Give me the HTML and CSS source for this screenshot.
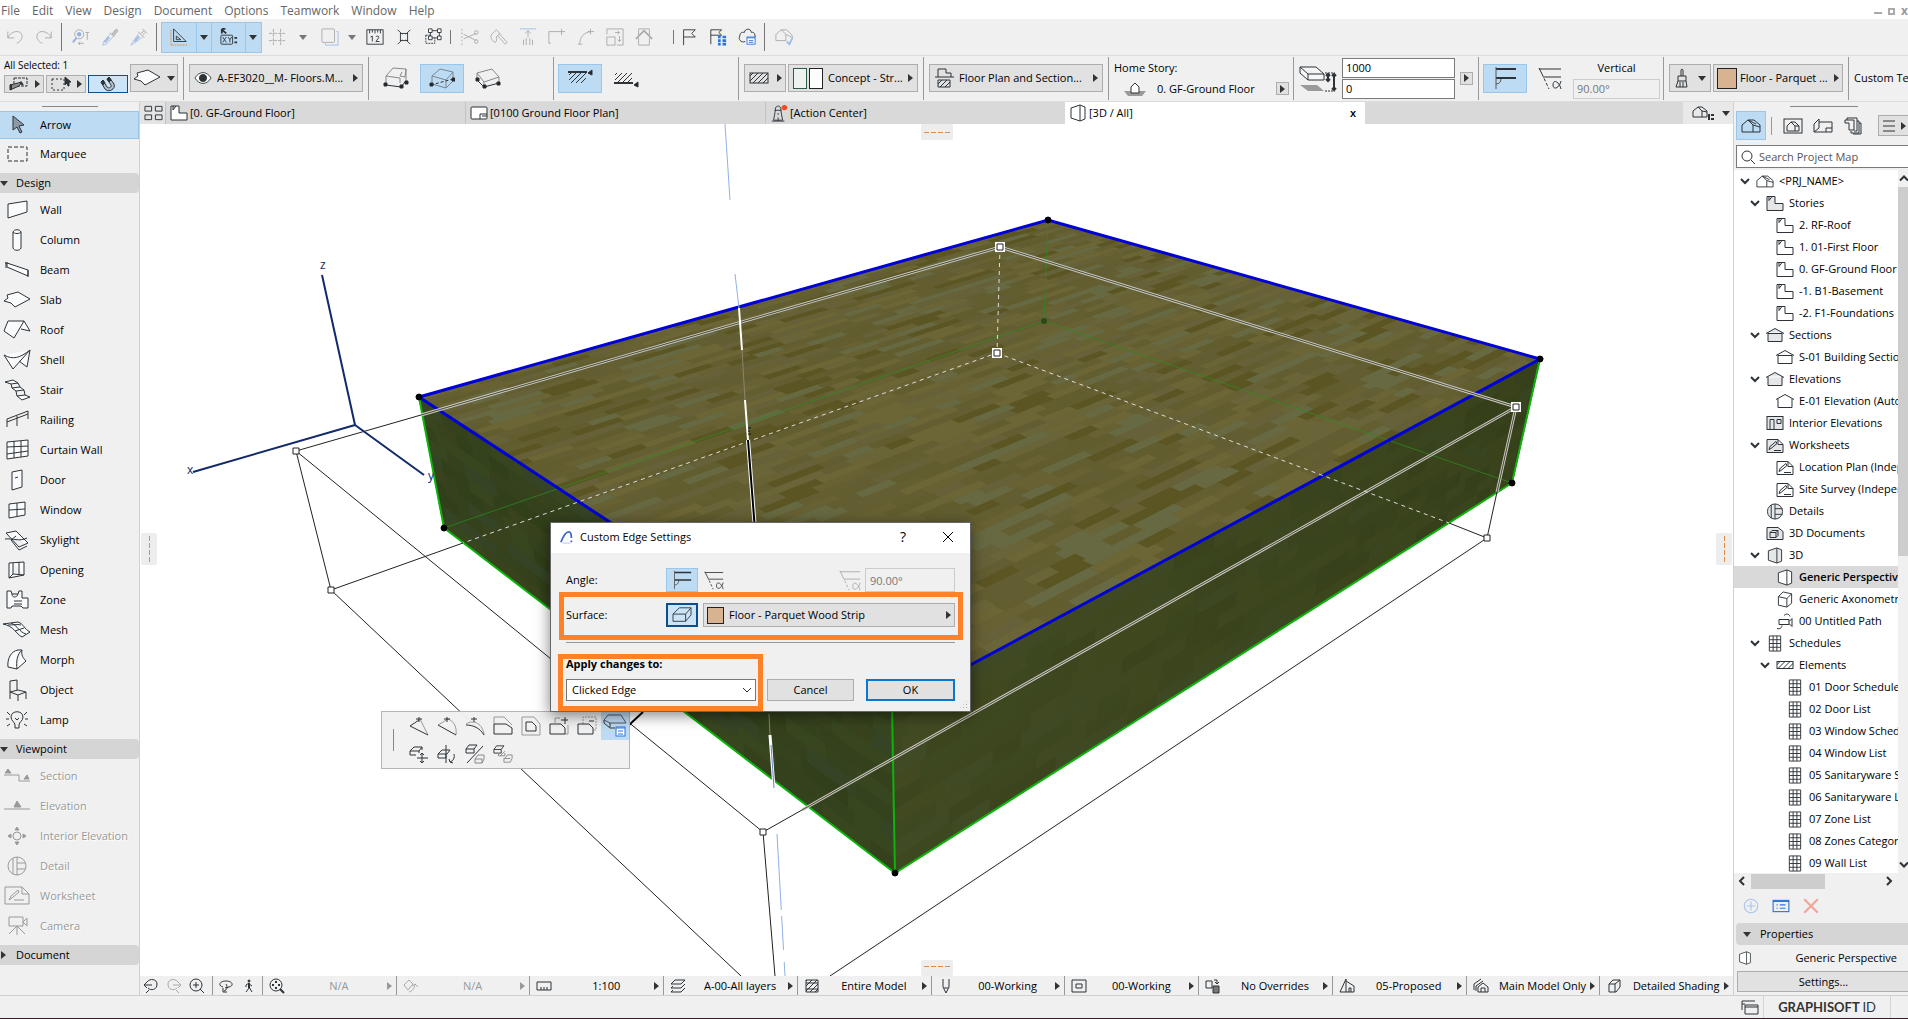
FILE: index.html
```
<!DOCTYPE html>
<html lang="en">
<head>
    <meta charset="UTF-8">
    <meta name="viewport" content="width=device-width, initial-scale=1.0">
    <title>Custom Edge Settings</title>
    <link rel="stylesheet" href="styles.css">
</head>
<body>
<!-- icon set -->
<svg class="defs" aria-hidden="true">
    <defs>
        <pattern id="hatch" width="5" height="5" patternUnits="userSpaceOnUse"><path d="M-1 6L6 -1M-1 1L1 -1M4 6L6 4" stroke="#2d3338" stroke-width="1"/></pattern>
    </defs>
    <!-- toolbar, 20 x 20 -->
    <symbol id="undo" viewBox="0 0 20 20"><path d="M2 4v7h7M2 11C5 3 17 1 18 9c0 4-3 7-6 8"/></symbol>
    <symbol id="redo" viewBox="0 0 20 20"><path d="M18 4v7h-7M18 11C15 3 3 1 2 9c0 4 3 7 6 8"/></symbol>
    <symbol id="findsel" viewBox="0 0 20 20"><circle cx="8" cy="7" r="5"/><circle cx="8" cy="7" r="2" fill="#8fb0e0" stroke="#8fb0e0"/><path d="M5 11l-4 5" stroke="#8fb0e0" stroke-width="2"/><path d="M15 5h4M17 5v8M7 17h6M9 15l-2 2 2 2"/></symbol>
    <symbol id="pick" viewBox="0 0 20 20"><path d="M10 5l5 5M12 7l4-5c2-1 3 0 2 2l-4 5" fill="#c4c4c4"/><path d="M11 6L3 15l-1 4 4-1 8-9" stroke="#a9c0e4"/><path d="M9 10l-5 6" stroke="#a9c0e4" stroke-width="3"/></symbol>
    <symbol id="inject" viewBox="0 0 20 20"><path d="M14 1l5 5M9 4l7 7M12 6l4-3M14 8l3-3"/><path d="M10 6l-6 8-3 5 5-3 8-6" stroke="#a9c0e4"/><path d="M10 9l-5 6" stroke="#a9c0e4" stroke-width="3"/></symbol>
    <symbol id="setsquare" viewBox="0 0 20 20"><path d="M4 1v14h14zM7 9v4h5z"/><path d="M1 2v17h18" stroke="#e08a3c" stroke-dasharray="2 1"/></symbol>
    <symbol id="xy" viewBox="0 0 20 20"><rect x="1" y="8" width="13" height="10" rx="1"/><path d="M16 11h3M16 16h3M2 2l5 4M2 1h4M2 1v5" stroke-width="2"/><path d="M3 10l4 6M7 10l-4 6M9 10l2 3 2-3M11 13v3"/></symbol>
    <symbol id="grid" viewBox="0 0 20 20"><path d="M6 1v18M14 1v18M1 6h18M1 14h18" stroke-dasharray="4 1"/></symbol>
    <symbol id="trace" viewBox="0 0 20 20"><rect x="1" y="1" width="14" height="15" rx="1"/><path d="M17 4h2v15H5v-2" stroke="#9dbdea"/></symbol>
    <symbol id="ruler12" viewBox="0 0 20 20"><rect x="1" y="2" width="18" height="16"/><path d="M4 2v4M7 2v3M10 2v4M13 2v3M16 2v4M5 10l2-1v6M11 10c1-2 4-1 3 1l-3 4h4"/></symbol>
    <symbol id="snap" viewBox="0 0 20 20"><rect x="6" y="6" width="8" height="8"/><path d="M3 2l5 5M17 2l-5 5M3 18l5-5M17 18l-5-5"/></symbol>
    <symbol id="group" viewBox="0 0 20 20"><rect x="7" y="3" width="10" height="8"/><path d="M2 8h5M2 8v9h10v-6" stroke-dasharray="2 1"/><g fill="#fff"><path d="M5 1h4v4H5zM15 1h4v4h-4zM5 9h4v4H5zM15 9h4v4h-4z"/></g></symbol>
    <symbol id="scissors" viewBox="0 0 20 20"><path d="M1 1v18" stroke-dasharray="2 2"/><path d="M3 7l14 7M3 12l14-6"/><circle cx="17" cy="5" r="2"/><circle cx="17" cy="15" r="2"/></symbol>
    <symbol id="axe" viewBox="0 0 20 20"><path d="M8 8l9 10 2-2L10 6"/><path d="M1 8l6-6 4 4-4 4c1 2 0 5-1 6-4-1-5-5-5-8z"/></symbol>
    <symbol id="beamup" viewBox="0 0 20 20"><path d="M1 1h18" stroke="#9dbdea"/><path d="M10 10V3M7 6l3-3 3 3M5 13v6M8 11v8M12 11v8M15 13v6"/></symbol>
    <symbol id="corner" viewBox="0 0 20 20"><path d="M1 17V4h18M3 17H1M15 1v7"/></symbol>
    <symbol id="arc" viewBox="0 0 20 20"><path d="M3 18C3 10 8 5 15 4M15 1v6M12 4h7M1 18h5"/></symbol>
    <symbol id="frame" viewBox="0 0 20 20"><path d="M1 7V1h18v18h-7"/><rect x="1" y="10" width="9" height="9"/><path d="M10 5h5M13 3l2 2-2 2M15 9v6M13 13l2 2 2-2"/></symbol>
    <symbol id="houseup" viewBox="0 0 20 20"><path d="M4 11v8h12v-8M4 8V1h12v7"/><path d="M1 12l9-9 9 9" stroke-width="2"/></symbol>
    <symbol id="flag" viewBox="0 0 20 20"><path d="M4 19V2h13l-4 4 4 4H4"/></symbol>
    <symbol id="flaglist" viewBox="0 0 20 20"><path d="M2 18V2h12l-3 3 3 3H2"/><path d="M10 10h3M15 10h4M10 14h3M15 14h4M10 18h3M15 18h4" stroke="#2d74dc" stroke-width="3"/></symbol>
    <symbol id="cloud" viewBox="0 0 20 20"><path d="M8 15c-5 2-8-3-6-6 0-3 2-5 5-4 1-5 7-5 8 0 3-1 4 2 4 5"/><rect x="10" y="10" width="9" height="8" fill="#fff" stroke="#2d74dc"/><path d="M10 11h9M12 14h5M12 16h5" stroke="#2d74dc"/></symbol>
    <symbol id="housecheck" viewBox="0 0 20 20"><path d="M1 14V7l6-5 5 5v7H1M7 2h6l6 6v3M12 7l6 3"/><path d="M13 15l3 3 4-8" stroke="#9dbdea" stroke-width="2"/></symbol>
    <!-- info box -->
    <symbol id="selset" viewBox="0 0 20 16"><path d="M5 2h13v8H5z" stroke-dasharray="3 1"/><path d="M1 14V9l12-3-3 4z" fill="#8b8b8b"/><path d="M2 8v6M11 6l3 3" stroke-width="2"/></symbol>
    <symbol id="selmarq" viewBox="0 0 20 16"><path d="M1 3h12v11H1z" stroke-dasharray="2 2"/><path d="M14 1v8l2-2 1 3h1V6h2z" fill="#2d3338"/></symbol>
    <symbol id="magnet" viewBox="0 0 20 16"><path d="M5 4l4 7c2 2 5 0 4-2L9 3l2-2 5 7c2 5-5 9-9 5L3 6z" fill="#b5c0c9"/><path d="M3 6l2-2 2 3-2 2zM9 3l2-2 2 3-2 2z" fill="#2d3338"/></symbol>
    <symbol id="eye" viewBox="0 0 20 20"><path d="M1 10c5-8 13-8 18 0-5 8-13 8-18 0z" fill="#fff"/><circle cx="10" cy="10" r="4" fill="#2d3338"/></symbol>
    <symbol id="edge1" viewBox="0 0 26 22"><path d="M3 9l7-8 13 1-1 8-5-1 2-4M3 9l14 2v5M3 9v8M23 2v14" stroke="#888"/><path d="M3 18l15 2 4-5"/><path d="M1 16h3v3H1zM17 18h3v3h-3zM22 14h3v3h-3z" fill="#222"/></symbol>
    <symbol id="edge2" viewBox="0 0 26 22"><path d="M3 9l8-7 13 3-7 8zM3 9v8l14 4 7-7V5M17 13v8" stroke="#778792"/><path d="M2 18l22-6" stroke-dasharray="3 2"/><path d="M1 16h3v3H1zM23 11h3v3h-3z" fill="#222"/></symbol>
    <symbol id="edge3" viewBox="0 0 26 22"><path d="M2 6l15-4 7 8-15 5zM2 6v7M24 10v6M9 15v5" stroke="#888"/><path d="M2 13l7 7 15-4"/><path d="M1 11h3v3H1zM8 18h3v3H8zM22 15h3v3h-3z" fill="#222"/></symbol>
    <symbol id="refline1" viewBox="0 0 26 22"><path d="M2 6h17v10H2z" fill="url(#hatch)" stroke="none"/><path d="M1 5h19" stroke-width="2"/><path d="M25 3l-4 3 4 2z" fill="#222"/></symbol>
    <symbol id="refline2" viewBox="0 0 26 22"><path d="M2 6h17v10H2z" fill="url(#hatch)" stroke="none"/><path d="M1 16h19" stroke-width="2"/><path d="M25 15l-4 3 4 2z" fill="#222"/></symbol>
    <symbol id="fillbox" viewBox="0 0 20 12"><rect x="1" y="1" width="18" height="10" fill="url(#hatch)"/></symbol>
    <symbol id="fpsec" viewBox="0 0 20 20"><path d="M4 9V1h8v4h5v4H1M17 9h3"/><path d="M4 12h12v7H4z" fill="url(#hatch)"/></symbol>
    <symbol id="homestory" viewBox="0 0 24 16"><path d="M1 10h22l-4 5H5z" fill="#9a9a9a" stroke="none"/><path d="M8 12V6l4-4 4 4v6z" fill="#fff"/></symbol>
    <symbol id="thick" viewBox="0 0 38 30"><path d="M1 4h16l8 7H9zM1 4v6l8 7h16v-6M9 11v6" fill="#f7f7f7"/><path d="M1 22h17l7 6H9z" fill="#9a9a9a" stroke="none"/><path d="M26 10h10M26 28h10" stroke-dasharray="2 1"/><path d="M29 11v7M27 13l2-2 2 2M27 16l2 2 2-2M35 11v16M33 13l2-2 2 2M33 25l2 2 2-2" stroke-width="2"/></symbol>
    <symbol id="vert" viewBox="0 0 24 24"><path d="M3 3h20M3 12h20" stroke-width="2"/><path d="M3 1v22M3 18c3 0 5-2 5-5" stroke="#555"/></symbol>
    <symbol id="slant" viewBox="0 0 24 24"><path d="M1 3h22M5 11h18M1 2l3 6"/><path d="M4 8l7 15" stroke-dasharray="3 2"/><path d="M23 15c-2 8-8 9-8 4 0-6 6-4 8 4"/></symbol>
    <symbol id="brush" viewBox="0 0 16 20"><path d="M7 8V2c0-1 2-1 2 0v6M4 8h8v5H4zM4 13l-2 6h11l-1-6M6 14v5M9 14v5"/></symbol>
    <!-- tabs -->
    <symbol id="tiles" viewBox="0 0 20 16"><path d="M1 1h7v5H1zM12 1h7v5h-7zM1 10h7v5H1zM12 10h7v5h-7z"/></symbol>
    <symbol id="story" viewBox="0 0 18 16"><path d="M1 1h8v7h8v7H1zM3 1v4l3-4" fill="#fff"/></symbol>
    <symbol id="storyg" viewBox="0 0 18 16"><path d="M1 1h8v7h8v7H1zM3 1v4l3-4" fill="#e4e6e8"/></symbol>
    <symbol id="layout" viewBox="0 0 18 16"><rect x="1" y="2" width="16" height="12" rx="1" fill="#fff"/><path d="M10 14v-5h7M12 11h5"/></symbol>
    <symbol id="tower" viewBox="0 0 18 20"><path d="M4 7h8M5 7V4l3-2 3 2v3M5 7L3 18h10L11 7M1 19h14M8 10v2M8 15v4"/><circle cx="15" cy="4" r="3" fill="#f04a23" stroke="none"/></symbol>
    <symbol id="persp" viewBox="0 0 16 18"><path d="M1 4l9-3 5 2v12l-5 2-9-3zM10 1v16" fill="#fff"/></symbol>
    <symbol id="perspg" viewBox="0 0 16 18"><path d="M1 4l9-3 5 2v12l-5 2-9-3zM10 1v16" fill="#e4e6e8"/></symbol>
    <symbol id="axo" viewBox="0 0 16 18"><path d="M1 6l5-5 9 2v10l-5 4-9-2zM1 6l9 2v9M10 8l5-5" fill="#fff"/></symbol>
    <symbol id="house" viewBox="0 0 20 16"><path d="M1 14V7l6-5 5 5v7zM7 2h6l6 5v7h-7M12 7l7 2M7 2l8 4"/></symbol>
    <symbol id="houselist" viewBox="0 0 22 16"><path d="M1 12V6l5-4 4 4v6H1M6 2h4l5 4v6h-5M10 6l5 1"/><path d="M16 10h1v5M19 10h3M19 14h3" stroke-width="2"/></symbol>
    <!-- tools, 28 x 24 -->
    <symbol id="arrow" viewBox="0 0 28 24"><path d="M10 3v14l4-3 3 6 2-1-3-6 5-1z" fill="#8d9aa5"/></symbol>
    <symbol id="marquee" viewBox="0 0 28 24"><path d="M5 5h19v14H5z" stroke-dasharray="4 2"/></symbol>
    <symbol id="wall" viewBox="0 0 28 24"><path d="M5 6l19-3v11L5 20z" fill="#fafbfc"/></symbol>
    <symbol id="column" viewBox="0 0 28 24"><path d="M10 4v16c1 3 7 3 8 0V4c-1-3-7-3-8 0zc1 2 7 2 8 0" fill="#fafbfc"/></symbol>
    <symbol id="beam" viewBox="0 0 28 24"><path d="M4 5l21 7v6L4 9zM3 4v6M2 5h3M25 12v7" fill="#fafbfc"/></symbol>
    <symbol id="slab" viewBox="0 0 28 24"><path d="M1 13l4-3-1-3 11-3 12 7-15 8-4-4z" fill="#fafbfc"/></symbol>
    <symbol id="roof" viewBox="0 0 28 24"><path d="M1 13L5 3h16L11 20zM21 3l6 10-9-2" fill="#fafbfc"/></symbol>
    <symbol id="shell" viewBox="0 0 28 24"><path d="M1 7c9 5 16 3 26-5l-3 17-8-6M27 2L10 21 1 7" fill="#fafbfc"/></symbol>
    <symbol id="stair" viewBox="0 0 28 24"><path d="M2 4l8-2 5 3-7 1zM8 6l1 4 8-1 4 3-8 1-4-3M15 5l2 4M13 13l1 5 8-1 5 2-8 3-5-4M21 12l1 5" fill="#fafbfc"/></symbol>
    <symbol id="railing" viewBox="0 0 28 24"><path d="M4 19v-8l21-8v8M4 14l21-8M14 8v10"/></symbol>
    <symbol id="cwall" viewBox="0 0 28 24"><path d="M4 4l21-2v16L4 21zM11 3v17M18 3v16M4 9l21-1M4 16l21-3" fill="#fafbfc"/></symbol>
    <symbol id="door" viewBox="0 0 28 24"><path d="M9 4l10-2v17L9 22zM12 10l3-1" fill="#fafbfc"/></symbol>
    <symbol id="window" viewBox="0 0 28 24"><path d="M6 6l16-2v13L6 20zM14 5v13M6 12l16-1" fill="#fafbfc"/></symbol>
    <symbol id="skylight" viewBox="0 0 28 24"><path d="M3 5l10-2 12 12-9 4zM2 11c8-1 14 3 22-1M13 8l-5 4 8 10 8-4" fill="#fafbfc"/></symbol>
    <symbol id="opening" viewBox="0 0 28 24"><path d="M6 5l15-1v13L6 20zM10 5v11l11 1M6 20l4-4M16 4v12" fill="#fafbfc"/></symbol>
    <symbol id="zone" viewBox="0 0 28 24"><path d="M4 3h4l1 3h6l1-3h3v7h6v10h-5l-2-2H9l-1 2H4zM11 13h8M11 16h8M9 6c0 4 5 4 6 0" fill="#fafbfc"/></symbol>
    <symbol id="mesh" viewBox="0 0 28 24"><path d="M0 6l15-2c6 2 6 7 12 10l-8 5C13 16 11 8 0 6zM8 5c7 3 8 9 15 11M5 7c5 0 9-1 13 0M12 13l9-3" fill="#fafbfc"/></symbol>
    <symbol id="morph" viewBox="0 0 28 24"><path d="M5 19C4 11 8 3 15 2h4c-1 5 1 8 4 11l-9 8zM19 2c-5 4-6 12-5 19" fill="#fafbfc"/></symbol>
    <symbol id="object" viewBox="0 0 28 24"><path d="M7 21V3l7-1v10M7 14l8-2 8 2-8 3zM23 14v7M15 17v6"/></symbol>
    <symbol id="lamp" viewBox="0 0 28 24"><path d="M12 17c0-3-4-4-4-8 0-7 12-7 12 0 0 4-4 5-4 8v3h-4zM12 10l2 2 2-2M4 4l3 3M24 4l-3 3M3 11h3M22 11h3M4 18l3-2M24 18l-3-2"/></symbol>
    <symbol id="section" viewBox="0 0 28 24"><path d="M1 11h15v6M16 17h11"/><path d="M2 9l3-4 3 4zM21 15l3-4 2 4z" fill="#999"/></symbol>
    <symbol id="elevation" viewBox="0 0 28 24"><path d="M1 15h26"/><path d="M11 13l3-6 4 6z" fill="#999"/></symbol>
    <symbol id="intelev" viewBox="0 0 28 24"><circle cx="14" cy="12" r="4"/><path d="M12 6l2-3 2 3zM12 18l2 3 2-3zM8 10l-3 2 3 2zM20 10l3 2-3 2z" fill="#999"/></symbol>
    <symbol id="detail" viewBox="0 0 28 24"><circle cx="14" cy="12" r="9"/><path d="M10 4v16M14 3v18M14 9h8M14 15h8"/></symbol>
    <symbol id="worksheet" viewBox="0 0 28 24"><path d="M2 3h17l7 7v10H2zM19 3v7h7M11 16h10M6 16l2-4 7-6 1 2-7 6z"/></symbol>
    <symbol id="camera" viewBox="0 0 28 24"><path d="M6 3h14v9H6zM20 8l4-4v8zM14 12v9M14 12l-8 8M14 12l8 8"/></symbol>
    <!-- navigator -->
    <symbol id="boxhouse" viewBox="0 0 20 16"><rect x="1" y="1" width="18" height="14"/><path d="M4 13V8l4-4 4 4v5zM8 4h4l4 4v5h-4M12 8h4"/></symbol>
    <symbol id="layouts" viewBox="0 0 20 16"><path d="M1 14V6l5-5v9zM6 4h13v10H1M13 14v-4h6"/></symbol>
    <symbol id="publish" viewBox="0 0 18 18"><path d="M1 3h9v10H5V6H1zM3 3V1h10v13h-3M13 4h2v12H7v-2M15 6h2v11H9"/></symbol>
    <symbol id="sechouse" viewBox="0 0 18 16"><path d="M2 5v9h14V5M0 6l9-5 9 5M2 6h14"/></symbol>
    <symbol id="elevhouse" viewBox="0 0 18 16"><path d="M2 5v9h14V5M0 6l9-5 9 5"/></symbol>
    <symbol id="interior" viewBox="0 0 18 16"><rect x="1" y="1" width="16" height="13" fill="#e4e6e8"/><path d="M4 14V4h4v10M11 4h4v4h-4z"/></symbol>
    <symbol id="ws" viewBox="0 0 18 16"><path d="M1 2h11l5 5v8H1zM12 2v5h5M3 12l1-3 6-5 1 2-6 5zM8 13h7"/></symbol>
    <symbol id="detaild" viewBox="0 0 18 18"><circle cx="9" cy="9" r="8" fill="#e4e6e8"/><path d="M5 2v14M9 1v16M9 6h8M9 12h8"/></symbol>
    <symbol id="doc3d" viewBox="0 0 18 16"><path d="M1 2h11l5 4v8H1zM4 7l2-2h6v5l-2 2H4zM4 7h6v5M10 7l2-2" fill="#e4e6e8"/></symbol>
    <symbol id="path" viewBox="0 0 18 16"><path d="M3 6h10v5H3zM13 8l3-3v8l-3-3M8 2c2-2 5-2 6 1M1 15c3 1 5-1 5-3"/></symbol>
    <symbol id="sched" viewBox="0 0 14 18"><path d="M1 1h12v16H1zM1 5h12M1 9h12M1 13h12M5 1v16M9 1v16"/></symbol>
    <symbol id="elems" viewBox="0 0 18 10"><rect x="1" y="1" width="16" height="7" fill="url(#hatch)"/></symbol>
    <symbol id="chev" viewBox="0 0 12 10"><path d="M2 3l4 4 4-4" stroke-width="2"/></symbol>
    <symbol id="search" viewBox="0 0 16 16"><circle cx="7" cy="7" r="5"/><path d="M11 11l4 4"/></symbol>
    <symbol id="lines" viewBox="0 0 14 12"><path d="M1 1h12M1 6h12M1 11h12"/></symbol>
    <symbol id="plus" viewBox="0 0 16 16"><circle cx="8" cy="8" r="6"/><path d="M8 4v8M4 8h8"/></symbol>
    <symbol id="card" viewBox="0 0 16 16"><rect x="1" y="3" width="14" height="10"/><path d="M1 4h14M4 7h1M7 7h5M4 10h1M7 10h5"/></symbol>
    <symbol id="cross" viewBox="0 0 16 16"><path d="M2 2l12 12M14 2L2 14"/></symbol>
    <symbol id="windows" viewBox="0 0 18 16"><path d="M1 11V2h13M1 5h3"/><path d="M4 6h13v9H4zM4 8h13" fill="#f0f0f0"/></symbol>
    <!-- quick options -->
    <symbol id="zback" viewBox="0 0 16 16"><path d="M4 4c3-4 10-3 10 2 0 6-6 7-9 4M1 7h8M4 4L1 7l3 3M6 12l-3 3"/></symbol>
    <symbol id="znext" viewBox="0 0 16 16"><path d="M12 4C9 0 2 1 2 6c0 6 6 7 9 4M15 7H7M12 4l3 3-3 3M10 12l3 3"/></symbol>
    <symbol id="zin" viewBox="0 0 16 16"><circle cx="7" cy="7" r="6"/><path d="M11 11l4 4M7 4v6M4 7h6"/></symbol>
    <symbol id="orbit" viewBox="0 0 16 16"><path d="M5 9C0 8 1 3 8 3s8 5 3 6l-4 1M8 6c2 3 1 6-2 7M5 10v4h4"/></symbol>
    <symbol id="walk" viewBox="0 0 16 16"><circle cx="8" cy="3" r="1" fill="#2d3338"/><path d="M8 5v5" stroke-width="2"/><path d="M8 5L5 7v2M8 6l3 2M8 10l-3 4M8 9l3 5"/></symbol>
    <symbol id="zfit" viewBox="0 0 16 16"><circle cx="7" cy="7" r="6"/><path d="M11 11l4 4M7 3v2M7 9v2M3 7h2M9 7h2" stroke-width="2"/></symbol>
    <symbol id="orient" viewBox="0 0 16 16"><path d="M1 7l5-5 4 4-5 6zM6 14c4-1 5-4 6-7M9 8l3-2 3 3"/></symbol>
    <symbol id="scale" viewBox="0 0 16 16"><path d="M1 4h14v8H1zM5 12V9M8 12V9M11 12V9"/></symbol>
    <symbol id="layers" viewBox="0 0 16 16"><path d="M1 6l4-4h10l-4 4zM1 10l2-2M1 10h10l4-4M1 14l2-2M1 14h10l4-4"/></symbol>
    <symbol id="structure" viewBox="0 0 16 16"><path d="M2 2h12v12H2z" fill="url(#hatch)"/><path d="M2 5h12M2 11h12"/></symbol>
    <symbol id="pen" viewBox="0 0 16 16"><path d="M5 1v8l3 6 3-6V1M6 10h4"/></symbol>
    <symbol id="mvo" viewBox="0 0 16 16"><path d="M1 2h14v12H1zM5 6h6v4H5z"/></symbol>
    <symbol id="override" viewBox="0 0 16 16"><path d="M1 3h6v7H1zM9 2h3v3M10 4l2 2 2-2"/><path d="M8 8h6v7H8z" fill="#777"/></symbol>
    <symbol id="reno" viewBox="0 0 16 16"><path d="M1 14h6V1L1 14M7 14h8V8L7 3M10 14v-4h2v4"/></symbol>
    <symbol id="mmodel" viewBox="0 0 16 16"><path d="M1 12V6l7-5M3 13V8l7-5M5 14V9l5-4 5 4v5zM8 14v-4h4v4"/></symbol>
    <symbol id="shading" viewBox="0 0 16 16"><path d="M3 6l4-4h7v7l-4 5H3zM3 6h6v8M9 6l5-4"/></symbol>
    <!-- pet palette, 20 x 20 -->
    <symbol id="p1" viewBox="0 0 20 20"><path d="M11 3l8 16" stroke="#999"/><path d="M10 4L1 10l18 9M10 1v5M7 3h6"/></symbol>
    <symbol id="p2" viewBox="0 0 20 20"><path d="M11 3C17 5 20 11 19 19M1 9l10-6" stroke="#999"/><path d="M1 9l18 10M10 1v5M7 3h6"/></symbol>
    <symbol id="p3" viewBox="0 0 20 20"><path d="M1 8c8-5 17 0 18 11" stroke="#999"/><path d="M1 9c7 0 14 3 18 10M9 1v5M6 3h6"/></symbol>
    <symbol id="p4" viewBox="0 0 20 20"><path d="M1 8V1h10l8 8" stroke="#999"/><path d="M1 8v10h18v-6l-6-4z"/></symbol>
    <symbol id="p5" viewBox="0 0 20 20"><path d="M1 1h12l6 7v11H1z" stroke="#999"/><path d="M5 6h6l4 4v5H5z"/></symbol>
    <symbol id="p6" viewBox="0 0 20 20"><path d="M6 7V2h5M19 9v9h-3" stroke="#999"/><path d="M1 8v10h15v-6l-4-4zM12 4h7M16 1v7"/></symbol>
    <symbol id="p7" viewBox="0 0 20 20"><path d="M6 8V1h13v13h-3" stroke-dasharray="2 1" stroke="#999"/><path d="M1 8v10h15v-6l-4-4zM12 5h5"/></symbol>
    <symbol id="p8" viewBox="0 0 24 24"><path d="M1 6l4-5h13l5 8H7z" stroke="#556"/><path d="M1 6v3l6 5h5M7 9v4"/><rect x="13" y="13" width="9" height="9" fill="#fff" stroke="#2d74dc"/><path d="M13 14h9M15 17h5M15 20h5" stroke="#2d74dc"/></symbol>
    <symbol id="q1" viewBox="0 0 20 20"><path d="M1 7l4-4h8l-3 4zM1 7v4h6M10 7v2M13 3v3M13 9v10M8 14h11M11 11l2-2 2 2M11 17l2 2 2-2"/></symbol>
    <symbol id="q2" viewBox="0 0 20 20"><path d="M1 10l4-4h8l-3 4zM1 10v4h8v-4M9 1v18M17 10c1 4-1 7-4 8M12 15l1 3 3 1"/></symbol>
    <symbol id="q3" viewBox="0 0 20 20"><path d="M1 5l3-4h8l-3 4zM1 5v4h8V5M18 2L2 19"/><path d="M10 15l3-4h6v4l-2 4h-7zM10 15h7v4" stroke="#888"/></symbol>
    <symbol id="q4" viewBox="0 0 22 20"><path d="M1 5l3-4h8l-3 4zM1 5v4h8V5"/><path d="M6 9v3h7V9M8 12l5-5M13 15l3-4h5v4l-2 4h-7v-4zM12 15h7" stroke="#888"/></symbol>
</svg>

<nav class="menubar">
    <button>File</button><button>Edit</button><button>View</button><button>Design</button><button>Document</button><button>Options</button><button>Teamwork</button><button>Window</button><button>Help</button>
    <div class="win-controls"><span class="wc-min"></span><span class="wc-max"></span><span>x</span></div>
</nav>

<div class="toolbar">
    <button class="tb off" aria-label="Undo"><svg><use href="#undo"/></svg></button>
    <button class="tb off" aria-label="Redo"><svg><use href="#redo"/></svg></button>
    <i class="sep"></i>
    <button class="tb off" aria-label="Find and Select"><svg><use href="#findsel"/></svg></button>
    <button class="tb off" aria-label="Pick Up Parameters"><svg><use href="#pick"/></svg></button>
    <button class="tb off" aria-label="Inject Parameters"><svg><use href="#inject"/></svg></button>
    <i class="sep"></i>
    <div class="tb-active">
        <button class="tb" aria-label="Guide Lines"><svg><use href="#setsquare"/></svg></button><button class="tri" aria-label="Guide Line Options"></button>
        <button class="tb" aria-label="Tracker"><svg><use href="#xy"/></svg></button><button class="tri" aria-label="Tracker Options"></button>
    </div>
    <button class="tb off" aria-label="Grid"><svg><use href="#grid"/></svg></button>
    <button class="tri wide off" aria-label="Grid Options"></button>
    <button class="tb off" aria-label="Trace"><svg><use href="#trace"/></svg></button>
    <button class="tri off" aria-label="Trace Options"></button>
    <button class="tb" aria-label="Measure"><svg><use href="#ruler12"/></svg></button>
    <button class="tb" aria-label="Snap"><svg><use href="#snap"/></svg></button>
    <button class="tb" aria-label="Suspend Groups"><svg><use href="#group"/></svg></button>
    <i class="sep short"></i>
    <button class="tb off" aria-label="Split"><svg><use href="#scissors"/></svg></button>
    <button class="tb off" aria-label="Trim"><svg><use href="#axe"/></svg></button>
    <button class="tb off" aria-label="Adjust"><svg><use href="#beamup"/></svg></button>
    <button class="tb off" aria-label="Intersect"><svg><use href="#corner"/></svg></button>
    <button class="tb off" aria-label="Fillet"><svg><use href="#arc"/></svg></button>
    <button class="tb off" aria-label="Resize"><svg><use href="#frame"/></svg></button>
    <button class="tb off" aria-label="Elevate"><svg><use href="#houseup"/></svg></button>
    <i class="sep short end"></i>
    <button class="tb" aria-label="Mark"><svg><use href="#flag"/></svg></button>
    <button class="tb" aria-label="Issues"><svg><use href="#flaglist"/></svg></button>
    <button class="tb" aria-label="BIMcloud"><svg><use href="#cloud"/></svg></button>
    <i class="sep"></i>
    <button class="tb off" aria-label="Check Model"><svg><use href="#housecheck"/></svg></button>
</div>

<div class="infobox">
    <div class="ig first">
        <div class="selcol">
            <span class="small">All Selected: 1</span>
            <div class="selrow">
                <button class="pop" aria-label="Selection"><svg class="s2016"><use href="#selset"/></svg><b class="rt"></b></button>
                <button class="pop" aria-label="Marquee Selection"><svg class="s2016"><use href="#selmarq"/></svg><b class="rt"></b></button>
                <button class="pop picked" aria-label="Magnet"><svg class="s2016"><use href="#magnet"/></svg></button>
            </div>
        </div>
        <button class="pop slabbtn" aria-label="Slab Tool"><svg class="s28"><use href="#slab"/></svg><i></i><b class="dn"></b></button>
    </div>
    <div class="ig"><button class="pop fill"><svg class="s16"><use href="#eye"/></svg><span>A-EF3020__M- Floors.M...</span><b class="rt"></b></button></div>
    <div class="ig">
        <button class="ib" aria-label="Edge method 1"><svg class="s26"><use href="#edge1"/></svg></button>
        <button class="ib on" aria-label="Edge method 2"><svg class="s26"><use href="#edge2"/></svg></button>
        <button class="ib" aria-label="Edge method 3"><svg class="s26"><use href="#edge3"/></svg></button>
    </div>
    <div class="ig tight">
        <button class="ib on" aria-label="Reference plane top"><svg class="s26"><use href="#refline1"/></svg></button>
        <button class="ib" aria-label="Reference plane bottom"><svg class="s26"><use href="#refline2"/></svg></button>
    </div>
    <div class="ig two">
        <button class="pop mid" aria-label="Structure Type"><svg class="s2012"><use href="#fillbox"/></svg><b class="rt"></b></button>
        <button class="pop fill"><i class="chip g"></i><i class="chip k"></i><span>Concept - Str...</span><b class="rt"></b></button>
    </div>
    <div class="ig"><button class="pop fill"><svg class="s20"><use href="#fpsec"/></svg><span>Floor Plan and Section...</span><b class="rt"></b></button></div>
    <div class="ig story">
        <span>Home Story:</span>
        <div><svg class="s2416"><use href="#homestory"/></svg><span>0. GF-Ground Floor</span><button class="pop mini" aria-label="Home Story"><b class="rt"></b></button></div>
    </div>
    <div class="ig thick">
        <svg class="s3830"><use href="#thick"/></svg>
        <div class="stack"><input aria-label="Thickness" value="1000"><input aria-label="Elevation" value="0"></div>
        <button class="pop mini" aria-label="Elevation options"><b class="rt"></b></button>
    </div>
    <div class="ig angle">
        <button class="ib on" aria-label="Perpendicular"><svg class="s24"><use href="#vert"/></svg></button>
        <button class="ib plain" aria-label="Custom angle"><svg class="s24"><use href="#slant"/></svg></button>
        <label class="stack">Vertical<input value="90.00°" disabled></label>
    </div>
    <div class="ig two">
        <button class="pop mid" aria-label="Override"><svg class="s1620"><use href="#brush"/></svg><b class="dn"></b></button>
        <button class="pop fill snug"><i class="chip wood"></i><span>Floor - Parquet ...</span><b class="rt"></b></button>
    </div>
    <div class="ig last"><span>Custom Tex</span></div>
</div>

<main>
    <aside class="toolbox">
        <div class="grip"></div>
        <button class="tool on"><svg><use href="#arrow"/></svg>Arrow</button>
        <button class="tool"><svg><use href="#marquee"/></svg>Marquee</button>
        <button class="head"><b class="dn"></b>Design</button>
        <button class="tool"><svg><use href="#wall"/></svg>Wall</button>
        <button class="tool"><svg><use href="#column"/></svg>Column</button>
        <button class="tool"><svg><use href="#beam"/></svg>Beam</button>
        <button class="tool"><svg><use href="#slab"/></svg>Slab</button>
        <button class="tool"><svg><use href="#roof"/></svg>Roof</button>
        <button class="tool"><svg><use href="#shell"/></svg>Shell</button>
        <button class="tool"><svg><use href="#stair"/></svg>Stair</button>
        <button class="tool"><svg><use href="#railing"/></svg>Railing</button>
        <button class="tool"><svg><use href="#cwall"/></svg>Curtain Wall</button>
        <button class="tool"><svg><use href="#door"/></svg>Door</button>
        <button class="tool"><svg><use href="#window"/></svg>Window</button>
        <button class="tool"><svg><use href="#skylight"/></svg>Skylight</button>
        <button class="tool"><svg><use href="#opening"/></svg>Opening</button>
        <button class="tool"><svg><use href="#zone"/></svg>Zone</button>
        <button class="tool"><svg><use href="#mesh"/></svg>Mesh</button>
        <button class="tool"><svg><use href="#morph"/></svg>Morph</button>
        <button class="tool"><svg><use href="#object"/></svg>Object</button>
        <button class="tool"><svg><use href="#lamp"/></svg>Lamp</button>
        <button class="head"><b class="dn"></b>Viewpoint</button>
        <button class="tool off" disabled><svg><use href="#section"/></svg>Section</button>
        <button class="tool off" disabled><svg><use href="#elevation"/></svg>Elevation</button>
        <button class="tool off" disabled><svg><use href="#intelev"/></svg>Interior Elevation</button>
        <button class="tool off" disabled><svg><use href="#detail"/></svg>Detail</button>
        <button class="tool off" disabled><svg><use href="#worksheet"/></svg>Worksheet</button>
        <button class="tool off" disabled><svg><use href="#camera"/></svg>Camera</button>
        <button class="head"><b class="rt"></b>Document</button>
    </aside>

    <section class="center">
        <div class="tabs">
            <button class="tiles" aria-label="Tab overview"><svg class="s2016"><use href="#tiles"/></svg></button>
            <button class="tab"><svg class="s18"><use href="#story"/></svg>[0. GF-Ground Floor]</button>
            <button class="tab"><svg class="s18"><use href="#layout"/></svg>[0100 Ground Floor Plan]</button>
            <button class="tab"><svg class="s18"><use href="#tower"/></svg>[Action Center]</button>
            <button class="tab on"><svg class="s18"><use href="#persp"/></svg>[3D / All]<b class="close">x</b></button>
            <button class="tabopts" aria-label="3D view options"><svg class="s22"><use href="#houselist"/></svg><b class="dn"></b></button>
        </div>

        <div class="viewport">
            <svg class="scene" viewBox="140 124 1593 852" preserveAspectRatio="xMidYMid slice">
                <polygon points="419,397 1048,220 1540,359 892,707" fill="#645f32"/>
                <polygon points="419,397 892,707 895,873 444,528" fill="#34421d"/>
                <polygon points="892,707 1540,359 1512,483 895,873" fill="#3c4621"/>
                <g id="planks"></g>
                <linearGradient id="shade" x1="0" x2="1"><stop offset="0" stop-color="#4a4f22" stop-opacity=".2"/><stop offset="1" stop-color="#28330f" stop-opacity=".3"/></linearGradient>
                <polygon points="892,707 1540,359 1512,483 895,873" fill="url(#shade)"/>

                <g class="hidden-edge"><path d="M1048 220L1044 321L444 528M1044 321L1512 483"/><circle cx="1044" cy="321" r="3"/></g>
                <g class="green"><path d="M419 397L444 528L895 873L1512 483L1540 359M892 707L895 873"/></g>
                <path class="blue" d="M419 397L1048 220L1540 359L892 707z"/>

                <!-- earlier outline of the slab -->
                <path class="ghost" d="M421 415L296 451L331 590L741 976M331 590L463 543M296 451L763 832L775 976M763 832L802 810M1449 523L1487 538L830 976M1487 538L1497 492"/>
                <path class="halo" d="M421 415L1000 247L1516 407L802 810M1516 407L1497 492"/>
                <path class="core" d="M421 415L1000 247L1516 407L802 810M1516 407L1497 492"/>
                <path class="dash" d="M1000 247L997 353L463 543M997 353L1449 523"/>

                <path class="lblue" d="M725 124L730 200M735 274L739 308M777 834L785 976"/>
                <path class="thin" d="M742 350L745 400M769 714L770 735"/>
                <path class="white" d="M739 308L742 350M745 400L748 440"/>
                <path class="wthin" d="M770 735L774 788"/>
                <path class="lthin" d="M771 745L774 788"/>
                <path class="wcase" d="M748 440L755 530"/><path class="bcore" d="M748 440L755 530"/>
                <path class="bcore" d="M629 725L643 712"/>

                <g class="axis"><path d="M355 425L322 275M355 425L193 472M355 425L424 475"/></g>
                <text x="320" y="269">z</text><text x="187" y="474">x</text><text x="428" y="480">y</text>

                <g class="dots"><circle cx="419" cy="397" r="3"/><circle cx="1048" cy="220" r="3"/><circle cx="1540" cy="359" r="3"/><circle cx="444" cy="528" r="3"/><circle cx="1512" cy="483" r="3"/><circle cx="895" cy="873" r="3"/></g>
                <g class="nodes"><path d="M293 448h6v6h-6zM328 587h6v6h-6zM760 829h6v6h-6zM1484 535h6v6h-6z"/></g>
                <g class="nodes cased"><path id="cased" d="M997 244h6v6h-6zM994 350h6v6h-6zM1513 404h6v6h-6z" stroke="#fff" stroke-width="4"/><path d="M997 244h6v6h-6zM994 350h6v6h-6zM1513 404h6v6h-6z"/></g>
                <path d="M748 428h3M748 431h2M748 434h3" stroke="#111"/>
            </svg>

            <i class="pad top"></i><i class="pad bottom"></i><i class="pad left"></i><i class="pad right"></i>

            <div class="petpalette">
                <i class="pethandle"></i>
                <div class="petgrid">
                    <button aria-label="Add node"><svg><use href="#p1"/></svg></button>
                    <button aria-label="Curve edge"><svg><use href="#p2"/></svg></button>
                    <button aria-label="Edit by tangent"><svg><use href="#p3"/></svg></button>
                    <button aria-label="Offset edge"><svg><use href="#p4"/></svg></button>
                    <button aria-label="Offset all edges"><svg><use href="#p5"/></svg></button>
                    <button aria-label="Add to polygon"><svg><use href="#p6"/></svg></button>
                    <button aria-label="Subtract from polygon"><svg><use href="#p7"/></svg></button>
                    <button class="on" aria-label="Custom edge settings"><svg class="big"><use href="#p8"/></svg></button>
                    <button aria-label="Drag"><svg><use href="#q1"/></svg></button>
                    <button aria-label="Rotate"><svg><use href="#q2"/></svg></button>
                    <button aria-label="Mirror"><svg><use href="#q3"/></svg></button>
                    <button aria-label="Multiply"><svg><use href="#q4"/></svg></button>
                </div>
            </div>

            <div class="dialog" role="dialog" aria-labelledby="dlgTitle">
                <div class="dlg-title">
                    <svg class="logo" viewBox="0 0 16 16"><path d="M1 14C4 6 7 2 10 2c3 0 3 4 3 7" stroke="#3b66c4" stroke-width="2"/><path d="M13 12v2" stroke="#3b66c4" stroke-width="2"/><path d="M3 15h9" stroke="#d5def4" stroke-width="2"/></svg>
                    <span id="dlgTitle">Custom Edge Settings</span>
                    <button class="q" aria-label="Help">?</button>
                    <button class="x" aria-label="Close"><svg viewBox="0 0 12 12"><path d="M1 1l10 10M11 1L1 11"/></svg></button>
                </div>
                <div class="dlg-body">
                    <div class="row angle-row">
                        <label for="dlgAngle">Angle:</label>
                        <button class="ib on sm" aria-label="Perpendicular"><svg class="s24"><use href="#vert"/></svg></button>
                        <button class="ib sm" aria-label="Custom angle"><svg class="s24"><use href="#slant"/></svg></button>
                        <svg class="s24 faded"><use href="#slant"/></svg>
                        <input id="dlgAngle" value="90.00°" disabled>
                    </div>
                    <div class="row surface-row">
                        <span class="lbl">Surface:</span>
                        <button class="pop picked surf" aria-label="Override surface"><svg viewBox="0 0 24 20"><path d="M2 9l7-7h13l-6 7zM2 9v8h14V9M16 17l6-7V2"/></svg></button>
                        <button class="pop fill"><i class="chip wood sm"></i><span>Floor - Parquet Wood Strip</span><b class="rt"></b></button>
                    </div>
                    <hr>
                    <label class="apply" for="applyTo">Apply changes to:</label>
                    <div class="row actions">
                        <div class="selectwrap">
                            <select id="applyTo"><option>Clicked Edge</option><option>All Edges</option></select>
                            <svg viewBox="0 0 12 10"><path d="M2 3l4 4 4-4"/></svg>
                        </div>
                        <button class="btn">Cancel</button>
                        <button class="btn ok">OK</button>
                    </div>
                </div>
                <i class="mark m1"></i><i class="mark m2"></i><i class="resize"></i>
            </div>
        </div>

        <div class="quick">
            <div class="qs z3"><button aria-label="Previous Zoom"><svg><use href="#zback"/></svg></button><button class="off" aria-label="Next Zoom"><svg><use href="#znext"/></svg></button><button aria-label="Zoom In"><svg><use href="#zin"/></svg></button></div>
            <div class="qs z2"><button aria-label="Orbit"><svg><use href="#orbit"/></svg></button><button aria-label="Explore"><svg><use href="#walk"/></svg></button></div>
            <button class="qs off"><svg class="dark"><use href="#zfit"/></svg><span>N/A</span><b class="rt"></b></button>
            <button class="qs off"><svg><use href="#orient"/></svg><span>N/A</span><b class="rt"></b></button>
            <button class="qs"><svg><use href="#scale"/></svg><span>1:100</span><b class="rt"></b></button>
            <button class="qs"><svg><use href="#layers"/></svg><span>A-00-All layers</span><b class="rt"></b></button>
            <button class="qs"><svg><use href="#structure"/></svg><span>Entire Model</span><b class="rt"></b></button>
            <button class="qs"><svg><use href="#pen"/></svg><span>00-Working</span><b class="rt"></b></button>
            <button class="qs"><svg><use href="#mvo"/></svg><span>00-Working</span><b class="rt"></b></button>
            <button class="qs"><svg><use href="#override"/></svg><span>No Overrides</span><b class="rt"></b></button>
            <button class="qs"><svg><use href="#reno"/></svg><span>05-Proposed</span><b class="rt"></b></button>
            <button class="qs"><svg><use href="#mmodel"/></svg><span>Main Model Only</span><b class="rt"></b></button>
            <button class="qs"><svg><use href="#shading"/></svg><span>Detailed Shading</span><b class="rt"></b></button>
        </div>
    </section>

    <aside class="navigator">
        <div class="grip"></div>
        <div class="navtabs">
            <button class="on" aria-label="Project Map"><svg class="s2016"><use href="#house"/></svg></button>
            <i></i>
            <button aria-label="View Map"><svg class="s2016"><use href="#boxhouse"/></svg></button>
            <button aria-label="Layout Book"><svg class="s2016"><use href="#layouts"/></svg></button>
            <button aria-label="Publisher"><svg class="s18"><use href="#publish"/></svg></button>
            <button class="pop navmenu" aria-label="Navigator menu"><svg class="s14"><use href="#lines"/></svg><b class="rt"></b></button>
        </div>
        <div class="searchbox"><svg class="s16"><use href="#search"/></svg><input type="text" placeholder="Search Project Map" aria-label="Search Project Map"></div>
        <div class="treewrap">
            <ul class="tree">
                <li class="l0"><svg class="c"><use href="#chev"/></svg><svg><use href="#house"/></svg>&lt;PRJ_NAME&gt;</li>
                <li class="l1"><svg class="c"><use href="#chev"/></svg><svg><use href="#storyg"/></svg>Stories</li>
                <li class="l2"><i class="c"></i><svg><use href="#story"/></svg>2. RF-Roof</li>
                <li class="l2"><i class="c"></i><svg><use href="#story"/></svg>1. 01-First Floor</li>
                <li class="l2"><i class="c"></i><svg><use href="#story"/></svg>0. GF-Ground Floor</li>
                <li class="l2"><i class="c"></i><svg><use href="#story"/></svg>-1. B1-Basement</li>
                <li class="l2"><i class="c"></i><svg><use href="#story"/></svg>-2. F1-Foundations</li>
                <li class="l1"><svg class="c"><use href="#chev"/></svg><svg class="grey"><use href="#sechouse"/></svg>Sections</li>
                <li class="l2"><i class="c"></i><svg><use href="#sechouse"/></svg>S-01 Building Section</li>
                <li class="l1"><svg class="c"><use href="#chev"/></svg><svg class="grey"><use href="#elevhouse"/></svg>Elevations</li>
                <li class="l2"><i class="c"></i><svg><use href="#elevhouse"/></svg>E-01 Elevation (Auto</li>
                <li class="l1"><i class="c"></i><svg><use href="#interior"/></svg>Interior Elevations</li>
                <li class="l1"><svg class="c"><use href="#chev"/></svg><svg class="grey"><use href="#ws"/></svg>Worksheets</li>
                <li class="l2"><i class="c"></i><svg><use href="#ws"/></svg>Location Plan (Indep</li>
                <li class="l2"><i class="c"></i><svg><use href="#ws"/></svg>Site Survey (Indepen</li>
                <li class="l1"><i class="c"></i><svg><use href="#detaild"/></svg>Details</li>
                <li class="l1"><i class="c"></i><svg><use href="#doc3d"/></svg>3D Documents</li>
                <li class="l1"><svg class="c"><use href="#chev"/></svg><svg><use href="#perspg"/></svg>3D</li>
                <li class="l2 on"><i class="c"></i><svg><use href="#persp"/></svg>Generic Perspective</li>
                <li class="l2"><i class="c"></i><svg><use href="#axo"/></svg>Generic Axonometry</li>
                <li class="l2"><i class="c"></i><svg><use href="#path"/></svg>00 Untitled Path</li>
                <li class="l1"><svg class="c"><use href="#chev"/></svg><svg><use href="#sched"/></svg>Schedules</li>
                <li class="l2"><svg class="c"><use href="#chev"/></svg><svg><use href="#elems"/></svg>Elements</li>
                <li class="l3"><i class="c"></i><svg><use href="#sched"/></svg>01 Door Schedule</li>
                <li class="l3"><i class="c"></i><svg><use href="#sched"/></svg>02 Door List</li>
                <li class="l3"><i class="c"></i><svg><use href="#sched"/></svg>03 Window Sched</li>
                <li class="l3"><i class="c"></i><svg><use href="#sched"/></svg>04 Window List</li>
                <li class="l3"><i class="c"></i><svg><use href="#sched"/></svg>05 Sanitaryware S</li>
                <li class="l3"><i class="c"></i><svg><use href="#sched"/></svg>06 Sanitaryware L</li>
                <li class="l3"><i class="c"></i><svg><use href="#sched"/></svg>07 Zone List</li>
                <li class="l3"><i class="c"></i><svg><use href="#sched"/></svg>08 Zones Categor</li>
                <li class="l3"><i class="c"></i><svg><use href="#sched"/></svg>09 Wall List</li>
            </ul>
            <div class="vscroll"><svg class="up"><use href="#chev"/></svg><i></i><svg><use href="#chev"/></svg></div>
        </div>
        <div class="hscroll"><svg class="lf"><use href="#chev"/></svg><i></i><svg class="rg"><use href="#chev"/></svg></div>
        <div class="navactions">
            <button class="add" aria-label="New"><svg class="s16"><use href="#plus"/></svg></button>
            <button class="set" aria-label="Settings"><svg class="s16"><use href="#card"/></svg></button>
            <button class="del" aria-label="Delete"><svg class="s16"><use href="#cross"/></svg></button>
        </div>
        <button class="prophead"><b class="dn"></b>Properties</button>
        <div class="proprow"><svg class="s14"><use href="#persp"/></svg><span>Generic Perspective</span></div>
        <button class="pop settings">Settings...</button>
    </aside>
</main>

<footer class="status">
    <svg class="s18"><use href="#windows"/></svg>
    <i></i><span>GRAPHISOFT <em>ID</em></span><i></i>
</footer>

<script src="scene.js"></script>
</body>
</html>
```
FILE: styles.css
```
*{
    box-sizing: border-box;
    margin: 0; padding: 0;
}
body{
    height: 100vh;
    display: flex;
    flex-direction: column;
    overflow: hidden;
    background-color: #f0f0f0;
    color: #000;
    font-family: "Open Sans", "Noto Sans", sans-serif;
    font-size: 11px;
    line-height: 16px;
}
button, input, select{
    font: inherit;
    color: inherit;
    border: 0;
    background: none;
    border-radius: 0;
}
button{
    white-space: nowrap;
}
svg{
    fill: none;
    stroke: #2d3338;
    stroke-width: 1;
    flex: none;
    display: block;
}
i{
    font-style: normal;
}
.defs{
    position: absolute;
    width: 0;
    height: 0;
}
.s14{ width: 14px; height: 14px; }
.s16{ width: 18px; height: 18px; }
.s18{ width: 18px; height: 18px; }
.s20{ width: 20px; height: 20px; }
.s22{ width: 22px; height: 16px; }
.s24{ width: 24px; height: 24px; }
.s26{ width: 26px; height: 22px; }
.s28{ width: 28px; height: 24px; }
.s2012{ width: 20px; height: 12px; }
.s2016{ width: 20px; height: 16px; }
.s1620{ width: 16px; height: 20px; }
.s2416{ width: 24px; height: 16px; }
.s3830{ width: 38px; height: 30px; }

/* little arrows */
.rt, .dn{
    flex: none;
    width: 0;
    height: 0;
    border: 4px solid transparent;
}
.rt{
    border-left: 5px solid #333;
    border-right: 0;
}
.dn{
    border-top: 5px solid #333;
    border-bottom: 0;
}

/* menu */
.menubar{
    height: 19px;
    flex: none;
    display: flex;
    align-items: center;
    background-color: #fff;
    color: #666;
    font-size: 12px;
    gap: 12px;
    padding: 3px 0 0 1px;
}
.win-controls{
    margin-left: auto;
    display: flex;
    align-items: center;
    gap: 6px;
    color: #999;
    font-weight: 700;
}
.wc-min{ width: 8px; height: 6px; border-bottom: 2px solid #aaa; }
.wc-max{ width: 7px; height: 7px; border: 2px solid #aaa; }

/* main toolbar */
.toolbar{
    height: 37px;
    flex: none;
    display: flex;
    align-items: center;
    border-bottom: 1px solid #dcdcdc;
}
.tb{
    width: 29px;
    height: 30px;
    flex: none;
    display: flex;
    align-items: center;
    justify-content: center;
}
.tb svg{ width: 18px; height: 18px; }
.off svg{ stroke: #a9a9a9; }
.tri{
    width: 16px;
    height: 30px;
    flex: none;
    display: flex;
    align-items: center;
    justify-content: center;
}
.tri::after{
    content: "";
    border: 4px solid transparent;
    border-top: 5px solid #333;
    border-bottom: 0;
}
.tri.off::after{ border-top-color: #777; }
.tri.wide{ width: 24px; }
.sep{
    flex: none;
    width: 8px;
    height: 28px;
    background: linear-gradient(#777, #777) 3px 0 / 1px 100% no-repeat;
}
.sep.short{ height: 14px; }
.sep.short.end{ width: 16px; background-position: 15px 0; }
.tb-active{
    width: 101px;
    height: 31px;
    flex: none;
    display: flex;
    align-items: center;
    background-color: #bddbf2;
    border: 1px solid #99c7ec;
}
.tb-active .tb{ width: 34px; height: 29px; }
.tb-active .tri{ width: 15px; height: 29px; border-left: 1px solid #99c7ec; }
.tb-active .tri + .tb{ border-left: 1px solid #99c7ec; }

/* info box */
.infobox{
    height: 46px;
    flex: none;
    display: flex;
    align-items: center;
    padding-bottom: 1px;
    overflow: hidden;
    border-bottom: 1px solid #dcdcdc;
}
.ig{
    flex: none;
    width: 185px;
    height: 43px;
    display: flex;
    align-items: center;
    gap: 2px;
    padding: 0 5px;
    border-right: 1px solid #999;
}
.ig.first{ width: 184px; padding: 0 4px; }
.ig.tight{ padding: 0 4px; }
.ig.last{ width: auto; border: 0; white-space: nowrap; }
.selcol{
    align-self: flex-start;
    display: flex;
    flex-direction: column;
    gap: 2px;
}
.small{ font-size: 10px; line-height: 16px; }
.selrow{ display: flex; gap: 2px; }
.pop{
    height: 28px;
    display: flex;
    align-items: center;
    justify-content: center;
    gap: 5px;
    padding: 0 4px;
    background-color: #e1e1e1;
    border: 1px solid #adadad;
    overflow: hidden;
}
.pop.fill{ flex: 1; }
.pop.fill span{ flex: 1; text-align: left; overflow: hidden; }
.pop.snug{ gap: 3px; padding: 0 3px; }
.selrow .pop{ width: 40px; height: 18px; gap: 6px; }
.pop.picked{ background-color: #cce4f7; border: 1px solid #0c4f8c; }
.slabbtn{ width: 48px; gap: 3px; padding: 0 2px; }
.slabbtn i{ width: 1px; height: 22px; background-color: #aaa; }
.pop.mid{ width: 42px; gap: 8px; }
.pop.mini{ width: 13px; height: 13px; padding: 0; }
.chip{
    flex: none;
    width: 14px;
    height: 21px;
    border: 1px solid #222;
    background-color: #fff;
}
.chip.g{ border-color: #2b5c45; background-color: #eef3f0; margin-right: -3px; }
.chip.wood{ width: 20px; height: 21px; background-color: #d8b392; }
.chip.wood.sm{ width: 17px; height: 17px; }
.ib{
    width: 44px;
    height: 29px;
    flex: none;
    display: flex;
    align-items: center;
    justify-content: center;
}
.ib.on{ background-color: #bddbf2; border: 1px solid #99c7ec; }
.ib.sm{ width: 32px; height: 24px; }
.ib.sm svg{ width: 20px; height: 20px; }
.story{ flex-direction: column; align-items: stretch; justify-content: center; gap: 5px; }
.story div{ display: flex; align-items: center; gap: 10px; padding-left: 9px; }
.story .mini{ margin-left: auto; margin-right: -1px; }
.stack{ display: flex; flex-direction: column; gap: 1px; flex: 1; }
.stack input{
    width: 100%;
    height: 20px;
    padding: 0 3px;
    background-color: #fff;
    border: 1px solid #7a7a7a;
}
.thick{ gap: 5px; }
.angle .stack{ text-align: center; line-height: 20px; }
.angle{ padding: 0 3px 0 4px; }
.angle .plain{ width: 42px; }
input:disabled, .angle .stack input:disabled{
    color: #777;
    background-color: #f0f0f0;
    border: 1px solid #ccc;
}

/* body */
main{
    flex: 1;
    min-height: 0;
    display: flex;
}
.toolbox{
    width: 140px;
    flex: none;
    border-right: 1px solid #d0d0d0;
    overflow: hidden;
}
.grip{
    width: 56px;
    height: 1px;
    margin: 4px auto;
    background-color: #888;
}
.tool{
    width: 100%;
    height: 30px;
    display: flex;
    align-items: center;
    gap: 9px;
    padding-left: 3px;
}
.tool svg{ width: 28px; height: 24px; }
.tool.on{ height: 28px; background-color: #bddbf2; border: 1px solid #99c7ec; border-left: 0; }
.tool.off{ color: #999; text-shadow: 1px 1px 0 #fff; }
.tool.off svg{ stroke: #999; }
.head{
    width: 100%;
    height: 20px;
    display: flex;
    align-items: center;
    gap: 8px;
    margin: 4px 0 2px;
    background-color: #d5d5d5;
    border-radius: 0 4px 4px 0;
}
.head .rt{ margin: 0 2px 0 1px; }
.center{
    flex: 1;
    min-width: 0;
    display: flex;
    flex-direction: column;
}
.tabs{
    height: 22px;
    flex: none;
    display: flex;
    background-color: #d9d9d9;
}
.tiles{ width: 25px; padding-left: 4px; background-color: #e4e4e4; }
.tiles svg{ width: 19px; }
.tab{
    flex: 0 1 300px;
    display: flex;
    align-items: center;
    gap: 2px;
    padding-left: 4px;
    border-left: 1px solid #c3c3c3;
}
.tab.on{ background-color: #fff; border: 0; }
.close{ margin-left: auto; margin-right: 9px; font-weight: 600; }
.tabopts{
    width: 50px;
    margin-left: auto;
    display: flex;
    align-items: center;
    justify-content: flex-end;
    gap: 8px;
    padding-right: 3px;
    background-color: #e9e9e9;
}
.viewport{
    flex: 1;
    min-height: 0;
    position: relative;
    overflow: hidden;
    background-color: #fff;
}
.scene{ width: 100%; height: 100%; }
.scene text{ fill: #10286a; stroke: none; font-size: 12px; }
#planks path{ stroke: none; }
.blue{ stroke: #0000d8; stroke-width: 3; }
.green{ stroke: #0cb40c; stroke-width: 2; }
.hidden-edge{ stroke: #2f8a20; stroke-opacity: .75; }
.hidden-edge circle{ fill: #2a4a18; stroke: none; }
.ghost{ stroke: #222; }
.halo{ stroke: #c8c8c0; stroke-width: 3; }
.core{ stroke: #4a4a33; }
.dash{ stroke: #ddd; stroke-dasharray: 4 4; }
.lblue{ stroke: #8fb0e8; stroke-dasharray: 76 6 34 12; }
.thin{ stroke: #8a8768; }
.white{ stroke: #fff; stroke-width: 2; }
.wthin{ stroke: #fff; stroke-width: 3; }
.lthin{ stroke: #5f84cc; }
.wcase{ stroke: #fff; stroke-width: 4; }
.bcore{ stroke: #000; stroke-width: 2; }
.axis{ stroke: #12296b; stroke-width: 2; }
.dots{ fill: #000; stroke: #000; }
.nodes{ fill: #fff; stroke: #222; }

/* pull handles on the window edges */
.pad{
    position: absolute;
    background-color: #ededed;
    border-radius: 2px;
}
.pad::after{ content: ""; position: absolute; }
.top, .bottom{ left: 49%; width: 32px; height: 16px; }
.top{ top: 0; }
.bottom{ bottom: 0; }
.left, .right{ top: 48%; width: 16px; height: 32px; }
.left{ left: 1px; }
.right{ right: 1px; }
.top::after, .bottom::after{ left: 3px; right: 3px; height: 1px; background: repeating-linear-gradient(90deg, #e58a45 0 5px, transparent 5px 7px); }
.top::after{ top: 8px; }
.bottom::after{ top: 6px; }
.left::after, .right::after{ top: 3px; bottom: 3px; left: 8px; width: 1px; background: repeating-linear-gradient(#e58a45 0 5px, transparent 5px 7px); }

.petpalette{
    position: absolute;
    left: 241px;
    top: 587px;
    width: 249px;
    height: 58px;
    display: flex;
    align-items: center;
    background-color: rgba(240, 240, 240, .96);
    border: 1px solid #b5b5b5;
}
.pethandle{ width: 1px; height: 22px; margin: 0 11px 0 11px; background-color: #888; }
.petgrid{ display: grid; grid-template-columns: repeat(8, 28px); grid-auto-rows: 28px; }
.petgrid button{ display: flex; align-items: center; justify-content: center; }
.petgrid svg{ width: 20px; height: 20px; }
.petgrid .big{ width: 24px; height: 24px; }
.petgrid .on{ background-color: #bddbf2; }

/* dialog */
.dialog{
    position: absolute;
    left: 410px;
    top: 398px;
    width: 421px;
    background-color: #f0f0f0;
    border: 1px solid #666;
    box-shadow: 0 3px 14px rgba(0, 0, 0, .5);
}
.dlg-title{
    height: 30px;
    display: flex;
    align-items: center;
    gap: 6px;
    padding: 0 16px 2px 9px;
    background-color: #fff;
}
.logo{ width: 14px; height: 14px; }
.dlg-title .q{ margin-left: auto; font-size: 14px; margin-right: 30px; }
.dlg-title .x svg{ width: 12px; height: 12px; stroke: #000; }
.dlg-body{ padding: 15px 15px 10px; }
.row{ display: flex; align-items: center; }
.row label, .lbl{ width: 100px; flex: none; }
.row input{ width: 90px; height: 24px; padding: 0 4px; }
.angle-row .faded{ width: 22px; stroke: #aaa; margin: 0 4px 0 auto; }
.surface-row{ margin-top: 11px; gap: 5px; }
.surface-row .lbl{ width: 95px; }
.surface-row .pop{ height: 24px; padding: 0 3px; }
.surface-row .surf{ width: 32px; border-width: 2px; }
.surf svg{ width: 22px; height: 18px; }
hr{ border: 0; border-top: 1px solid #999; margin: 15px 0 12px; }
.apply{ display: block; font-weight: 700; line-height: 18px; }
.actions{ gap: 12px; margin-top: 6px; }
.selectwrap{ position: relative; width: 190px; margin-right: -1px; }
.selectwrap select{
    width: 100%;
    height: 22px;
    padding: 0 5px;
    appearance: none;
    background-color: #fff;
    border: 1px solid #777;
}
.selectwrap svg{ position: absolute; right: 3px; top: 6px; width: 12px; height: 10px; }
.btn{
    flex: 1;
    height: 22px;
    background-color: #e1e1e1;
    border: 1px solid #adadad;
}
.btn.ok{ border: 2px solid #0b78d0; }
.mark{
    position: absolute;
    border: 5px solid #fd8127;
    pointer-events: none;
}
.m1{ left: 8px; top: 69px; width: 404px; height: 48px; }
.m2{ left: 7px; top: 131px; width: 205px; height: 57px; }
.resize{
    position: absolute;
    right: 2px;
    bottom: 2px;
    width: 9px;
    height: 9px;
    background: radial-gradient(#aaa 1px, transparent 1px) 0 0 / 3px 3px;
    clip-path: polygon(100% 0, 100% 100%, 0 100%);
}

/* quick options */
.quick{
    height: 19px;
    flex: none;
    display: flex;
}
.qs{
    flex: 1;
    min-width: 0;
    display: flex;
    align-items: center;
    padding: 0 4px 0 6px;
    border-right: 1px solid #999;
}
.qs:last-child{ border-right: 0; }
.qs svg{ width: 16px; height: 16px; }
.qs span{ flex: 1; text-align: center; margin-left: 8px; margin-right: 2px; }
.qs.off{ color: #999; }
.qs.off .rt{ border-left-color: #999; }
.qs .dark{ stroke: #2d3338; }
.z3{ flex: 0 0 73px; gap: 7px; padding: 0 3px; }
.z2{ flex: 0 0 50px; gap: 7px; padding: 0 5px; }

/* navigator */
.navigator{
    width: 175px;
    flex: none;
    display: flex;
    flex-direction: column;
    border-left: 1px solid #d0d0d0;
    overflow: hidden;
}
.navigator .grip{ width: 68px; flex: none; margin: 4px 0 4px 56px; }
.navtabs{
    flex: none;
    display: flex;
    align-items: center;
    height: 29px;
    padding-left: 2px;
}
.navtabs button{ width: 30px; height: 29px; display: flex; align-items: center; justify-content: center; }
.navtabs .on{ background-color: #bddbf2; border: 1px solid #99c7ec; }
.navtabs i{ width: 1px; height: 18px; margin: 0 6px 0 5px; background-color: #999; }
.navtabs .navmenu{ width: 32px; height: 21px; margin-left: auto; margin-right: -2px; gap: 5px; }
.searchbox{
    flex: none;
    height: 23px;
    margin: 5px 0 2px 2px;
    display: flex;
    align-items: center;
    gap: 3px;
    padding-left: 3px;
    background-color: #fff;
    border: 1px solid #7a7a7a;
    border-right: 0;
}
.searchbox input{ flex: 1; min-width: 0; outline: 0; }
.searchbox input::placeholder{ color: #555; opacity: 1; }
.searchbox svg{ width: 16px; height: 16px; }
.treewrap{
    flex: 1;
    min-height: 0;
    display: flex;
    background-color: #fff;
}
.tree{
    flex: 1;
    min-width: 0;
    list-style: none;
    overflow: hidden;
}
.tree li{
    height: 22px;
    display: flex;
    align-items: center;
    gap: 5px;
    white-space: nowrap;
}
.tree svg{ width: 18px; height: 17px; }
.tree .c{ width: 12px; height: 10px; flex: none; }
.tree .grey{ fill: #e4e6e8; }
.tree .on{ background-color: #d9d9d9; font-weight: 600; }
.l0{ padding-left: 5px; }
.l1{ padding-left: 15px; }
.l2{ padding-left: 25px; }
.l3{ padding-left: 35px; }
.vscroll{
    width: 10px;
    flex: none;
    display: flex;
    flex-direction: column;
    background-color: #f0f0f0;
}
.vscroll svg{ width: 12px; height: 17px; }
.vscroll .up{ transform: rotate(180deg); }
.vscroll i{ height: 369px; background-color: #cdcdcd; margin-bottom: auto; }
.hscroll{
    flex: none;
    height: 16px;
    display: flex;
    align-items: center;
    padding: 0 13px 0 2px;
}
.hscroll svg{ width: 12px; height: 10px; }
.lf{ transform: rotate(90deg); }
.rg{ transform: rotate(-90deg); margin-left: auto; }
.hscroll i{ width: 74px; height: 15px; margin-left: 3px; background-color: #cdcdcd; }
.navactions{
    flex: none;
    height: 34px;
    display: flex;
    align-items: center;
    gap: 12px;
    padding-left: 8px;
}
.add svg{ stroke: #a9c4ee; }
.set svg{ stroke: #2d74dc; }
.del svg{ stroke: #f2a799; stroke-width: 2; }
.prophead{
    flex: none;
    height: 22px;
    margin-left: 2px;
    display: flex;
    align-items: center;
    gap: 9px;
    padding-left: 7px;
    background-color: #d5d5d5;
    border-radius: 4px 0 0 4px;
}
.proprow{
    flex: none;
    height: 26px;
    display: flex;
    align-items: center;
    padding-left: 4px;
}
.proprow span{ margin-left: auto; margin-right: 11px; }
.settings{ flex: none; height: 21px; margin: 0 -2px 3px 3px; }

.status{
    flex: none;
    height: 24px;
    display: flex;
    align-items: center;
    justify-content: flex-end;
    gap: 4px;
    padding-right: 17px;
    border-top: 1px solid #d0d0d0;
    border-bottom: 1px solid #3c1a2c;
    font-family: Lato, sans-serif;
    font-size: 13px;
    color: #333;
}
.status i{ width: 1px; height: 100%; background-color: #d5d5d5; }
.status span{ padding: 0 10px; font-weight: 700; }
.status em{ font-style: normal; font-weight: 400; }
```
FILE: scene.js
```
// parquet strips on the slab faces
const NS = 'http://www.w3.org/2000/svg';
const layer = document.getElementById('planks');
let seed = 7;
function rnd() {
    seed = (seed * 16807) % 2147483647;
    return seed / 2147483647;
}

// unit square -> quad, corners in order (0,0) (1,0) (1,1) (0,1)
function projector(q) {
    const [a, b, c, d] = q;
    const dx1 = b[0] - c[0], dx2 = d[0] - c[0], sx = a[0] - b[0] + c[0] - d[0];
    const dy1 = b[1] - c[1], dy2 = d[1] - c[1], sy = a[1] - b[1] + c[1] - d[1];
    const det = dx1 * dy2 - dx2 * dy1;
    const g = (sx * dy2 - dx2 * sy) / det;
    const h = (dx1 * sy - sx * dy1) / det;
    return (u, v) => {
        const w = g * u + h * v + 1;
        const x = ((b[0] - a[0] + g * b[0]) * u + (d[0] - a[0] + h * d[0]) * v + a[0]) / w;
        const y = ((b[1] - a[1] + g * b[1]) * u + (d[1] - a[1] + h * d[1]) * v + a[1]) / w;
        return x.toFixed(1) + ' ' + y.toFixed(1);
    };
}

function face(quad, rows, len, tones, opacity) {
    const p = projector(quad);
    const paths = tones.map(() => '');
    for (let r = 0; r < rows; r++) {
        let u = -rnd() * len;
        while (u < 1) {
            const u0 = Math.max(u, 0);
            const u1 = Math.min(u + len * (0.6 + rnd() * 0.8), 1);
            const v0 = r / rows, v1 = (r + 1) / rows;
            const t = Math.floor(rnd() * tones.length);
            if (u1 > u0) paths[t] += 'M' + p(u0, v0) + 'L' + p(u1, v0) + 'L' + p(u1, v1) + 'L' + p(u0, v1) + 'z';
            u = u1;
        }
    }
    paths.forEach((d, i) => {
        const el = document.createElementNS(NS, 'path');
        el.setAttribute('d', d);
        el.setAttribute('fill', tones[i]);
        el.setAttribute('opacity', opacity);
        layer.appendChild(el);
    });
}

face([[419, 397], [1048, 220], [1540, 359], [892, 707]], 64, 0.05,
    ['#615c2e', '#686235', '#6c663b', '#59531f', '#645f32', '#686c46', '#625e32', '#6e6736', '#67613a'], 0.8);
face([[892, 707], [1540, 359], [1512, 483], [895, 873]], 10, 0.05,
    ['#3b4721', '#404a24', '#37421c', '#3e4c2a', '#424921', '#3a451f'], 0.7);
face([[419, 397], [892, 707], [895, 873], [444, 528]], 10, 0.06,
    ['#35431e', '#3a4822', '#303e1a', '#36462a', '#3a4520', '#34411c'], 0.7);
```
